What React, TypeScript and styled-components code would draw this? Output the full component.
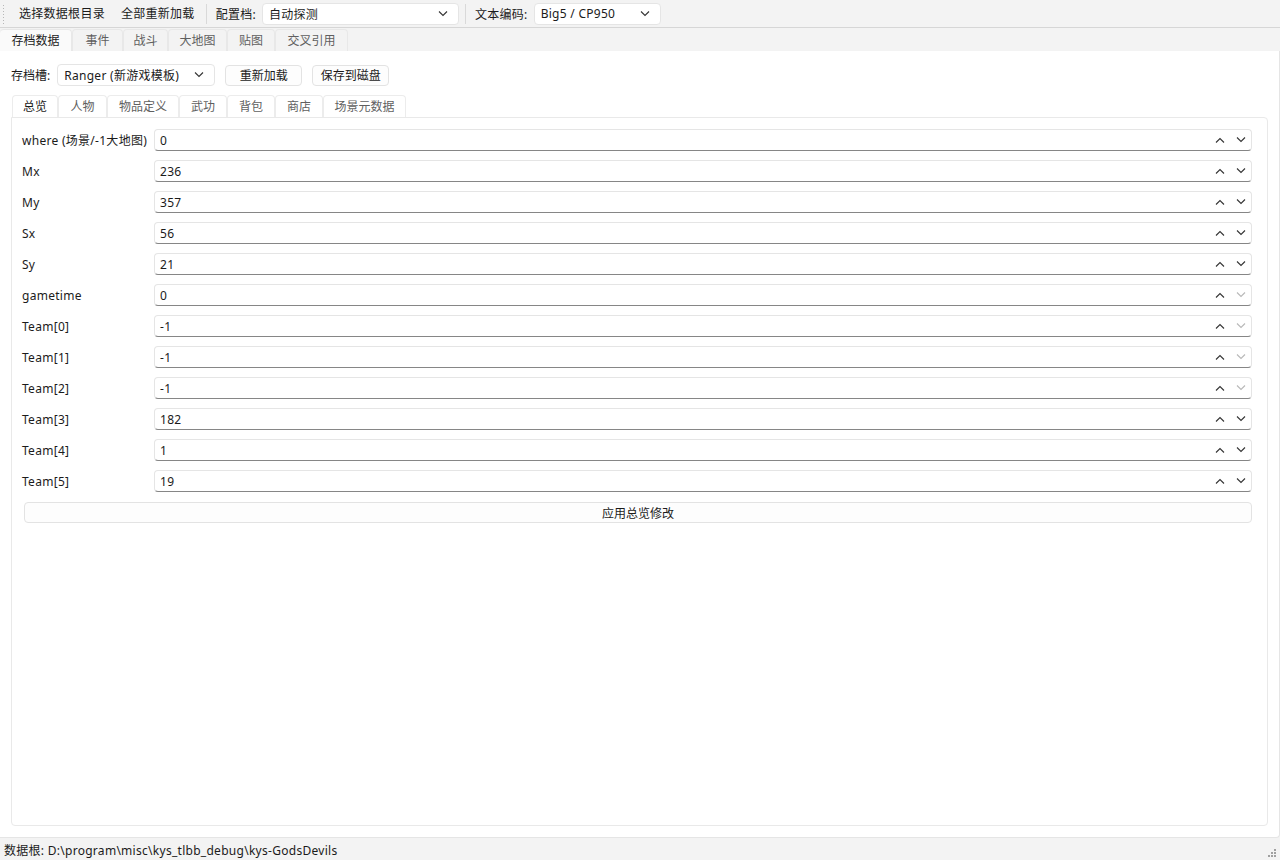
import React from 'react';
import styled, { createGlobalStyle } from 'styled-components';

const GlobalStyle = createGlobalStyle`
	html, body {
		margin: 0;
		padding: 0;
		background: #f3f3f3;
	}
	body {
		font-family: "Noto Sans", "Noto Sans CJK SC", sans-serif;
		font-size: 12px;
		letter-spacing: 0.28px;
		color: #1b1b1b;
	}
`;

const fields = [
	{ label: 'where (场景/-1大地图)', value: '0', atMin: false },
	{ label: 'Mx', value: '236', atMin: false },
	{ label: 'My', value: '357', atMin: false },
	{ label: 'Sx', value: '56', atMin: false },
	{ label: 'Sy', value: '21', atMin: false },
	{ label: 'gametime', value: '0', atMin: true },
	{ label: 'Team[0]', value: '-1', atMin: true },
	{ label: 'Team[1]', value: '-1', atMin: true },
	{ label: 'Team[2]', value: '-1', atMin: true },
	{ label: 'Team[3]', value: '182', atMin: false },
	{ label: 'Team[4]', value: '1', atMin: false },
	{ label: 'Team[5]', value: '19', atMin: false },
];

const mainTabs = [
	{ text: '存档数据', width: 72 },
	{ text: '事件', width: 51 },
	{ text: '战斗', width: 45 },
	{ text: '大地图', width: 59 },
	{ text: '贴图', width: 48 },
	{ text: '交叉引用', width: 73 },
];

const subTabs = [
	{ text: '总览', width: 46 },
	{ text: '人物', width: 49 },
	{ text: '物品定义', width: 72 },
	{ text: '武功', width: 48 },
	{ text: '背包', width: 48 },
	{ text: '商店', width: 48 },
	{ text: '场景元数据', width: 83 },
];

const Chevron = ({ up, dim }: { up?: boolean; dim?: boolean }) => (
	<svg width="10" height="6" viewBox="0 0 10 6">
		<path
			d={up ? 'M1 5.5L5 1.5L9 5.5' : 'M1 0.5L5 4.5L9 0.5'}
			fill="none"
			stroke={dim ? '#b8b8b8' : '#333'}
			strokeWidth="1.1"
		/>
	</svg>
);

const Combo = ({ text, width }: { text: string; width: number }) => (
	<ComboBox $width={width}>
		<span>{text}</span>
		<Chevron />
	</ComboBox>
);

const App = () => {
	return (
		<Window>
			<GlobalStyle />
			<ToolBar>
				<Grip />
				<ToolButton>选择数据根目录</ToolButton>
				<ToolButton>全部重新加载</ToolButton>
				<Separator />
				<ToolLabel>配置档:</ToolLabel>
				<Combo text="自动探测" width={197} />
				<Separator />
				<ToolLabel>文本编码:</ToolLabel>
				<Combo text="Big5 / CP950" width={127} />
			</ToolBar>

			<TabBar>
				{mainTabs.map((t, i) => (
					<Tab key={t.text} $active={i === 0} $width={t.width}>{t.text}</Tab>
				))}
			</TabBar>

			<MainPanel>
				<SlotRow>
					<SlotLabel>存档槽:</SlotLabel>
					<Combo text="Ranger (新游戏模板)" width={158} />
					<PushButton $width={77}>重新加载</PushButton>
					<PushButton $width={77}>保存到磁盘</PushButton>
				</SlotRow>

				<SubTabBar>
					{subTabs.map((t, i) => (
						<SubTab key={t.text} $active={i === 0} $width={t.width}>{t.text}</SubTab>
					))}
				</SubTabBar>

				<SubPanel>
					<Form>
						{fields.map((f) => (
							<FieldRow key={f.label}>
								<FieldLabel>{f.label}</FieldLabel>
								<SpinBox>
									<span>{f.value}</span>
									<Arrows>
										<Chevron up />
										<Chevron dim={f.atMin} />
									</Arrows>
								</SpinBox>
							</FieldRow>
						))}
					</Form>
					<ApplyButton>应用总览修改</ApplyButton>
				</SubPanel>
			</MainPanel>

			<StatusBar>
				<span>数据根: D:\program\misc\kys_tlbb_debug\kys-GodsDevils</span>
				<SizeGrip viewBox="0 0 12 12">
					<rect x="8" y="2" width="2" height="2" />
					<rect x="5" y="5" width="2" height="2" />
					<rect x="8" y="5" width="2" height="2" />
					<rect x="2" y="8" width="2" height="2" />
					<rect x="5" y="8" width="2" height="2" />
					<rect x="8" y="8" width="2" height="2" />
				</SizeGrip>
			</StatusBar>
		</Window>
	);
};

export default App;

const Window = styled.div`
	width: 1280px;
	height: 860px;
	display: flex;
	flex-direction: column;
	background: #f3f3f3;
	overflow: hidden;
`;

const ToolBar = styled.div`
	height: 28px;
	display: flex;
	align-items: center;
	padding-left: 2px;
	border-bottom: 1px solid #d6d6d6;
	box-sizing: border-box;
	flex-shrink: 0;
`;

const Grip = styled.div`
	width: 4px;
	height: 20px;
	margin-right: 6px;
	background-image: radial-gradient(circle, #a8a8a8 0.8px, transparent 1px);
	background-size: 3px 3px;
	opacity: 0.8;
`;

const ToolButton = styled.div`
	padding: 0 7px;
	margin-right: 2px;
	height: 22px;
	line-height: 22px;
	white-space: nowrap;
`;

const Separator = styled.div`
	width: 1px;
	height: 20px;
	background: #d9d9d9;
	margin: 0 9px 0 2px;
`;

const ToolLabel = styled.span`
	margin-right: 6px;
	white-space: nowrap;
`;

const ComboBox = styled.div<{ $width: number }>`
	width: ${(p) => p.$width}px;
	height: 22px;
	box-sizing: border-box;
	display: flex;
	align-items: center;
	justify-content: space-between;
	padding: 0 10px 0 6px;
	background: #fff;
	border: 1px solid #e5e5e5;
	border-radius: 4px;
	margin-right: 4px;
	white-space: nowrap;
`;

const TabBar = styled.div`
	display: flex;
	height: 23px;
	padding-top: 1px;
	box-sizing: border-box;
	flex-shrink: 0;
`;

const Tab = styled.div<{ $active?: boolean; $width: number }>`
	width: ${(p) => p.$width}px;
	text-align: center;
	height: 22px;
	line-height: 21px;
	box-sizing: border-box;
	border: 1px solid #e8e8e8;
	border-bottom: none;
	border-left: ${(p) => (p.$active ? 'none' : '1px solid #e8e8e8')};
	border-radius: 4px 4px 0 0;
	background: ${(p) => (p.$active ? '#fafafa' : '#f3f3f3')};
	color: ${(p) => (p.$active ? '#1b1b1b' : '#5f5f5f')};
	white-space: nowrap;
	letter-spacing: 0;
`;

const MainPanel = styled.div`
	flex: 1;
	display: flex;
	flex-direction: column;
	background: #fff;
	border-right: 1px solid #e5e5e5;
	border-bottom: 1px solid #e5e5e5;
	border-radius: 0 0 4px 0;
	padding: 13px 11px 11px 11px;
	box-sizing: border-box;
	min-height: 0;
`;

const SlotRow = styled.div`
	display: flex;
	align-items: center;
	height: 22px;
`;

const SlotLabel = styled.span`
	margin-right: 7px;
	letter-spacing: 0;
`;

const PushButton = styled.div<{ $width: number }>`
	width: ${(p) => p.$width}px;
	height: 21px;
	box-sizing: border-box;
	display: flex;
	align-items: center;
	justify-content: center;
	background: #fdfdfd;
	border: 1px solid #e3e3e3;
	border-radius: 4px;
	margin: 0 4px 0 6px;
	letter-spacing: 0;
`;

const SubTabBar = styled.div`
	display: flex;
	margin-top: 9px;
	height: 22px;
	padding-left: 1px;
`;

const SubTab = styled.div<{ $active?: boolean; $width: number }>`
	width: ${(p) => p.$width}px;
	text-align: center;
	height: 22px;
	line-height: 21px;
	box-sizing: border-box;
	border: 1px solid #ececec;
	border-bottom: none;
	border-radius: 4px 4px 0 0;
	background: #fff;
	color: ${(p) => (p.$active ? '#1b1b1b' : '#5f5f5f')};
	white-space: nowrap;
	letter-spacing: 0;
`;

const SubPanel = styled.div`
	flex: 1;
	border: 1px solid #e9e9e9;
	border-radius: 0 4px 4px 4px;
	padding: 11px 15px 0 10px;
	display: flex;
	flex-direction: column;
	min-height: 0;
`;

const Form = styled.div`
	display: flex;
	flex-direction: column;
	gap: 9px;
`;

const FieldRow = styled.div`
	display: flex;
	align-items: center;
	height: 22px;
`;

const FieldLabel = styled.div`
	width: 132px;
	flex-shrink: 0;
	white-space: nowrap;
`;

const SpinBox = styled.div`
	flex: 1;
	height: 22px;
	box-sizing: border-box;
	display: flex;
	align-items: center;
	justify-content: space-between;
	padding: 0 5px 0 5px;
	background: #fff;
	border: 1px solid #e5e5e5;
	border-bottom: 1px solid #868686;
	border-radius: 4px;
`;

const Arrows = styled.div`
	display: flex;
	gap: 11px;
	align-items: center;
`;

const ApplyButton = styled.div`
	margin: 10px 0 0 2px;
	height: 21px;
	box-sizing: border-box;
	display: flex;
	align-items: center;
	justify-content: center;
	background: #fdfdfd;
	border: 1px solid #e3e3e3;
	border-radius: 4px;
	letter-spacing: 0;
`;

const StatusBar = styled.div`
	height: 22px;
	flex-shrink: 0;
	display: flex;
	align-items: center;
	justify-content: space-between;
	padding: 0 2px 0 4px;
	span {
		margin-top: 2px;
	}
`;

const SizeGrip = styled.svg`
	width: 12px;
	height: 12px;
	fill: #a0a0a0;
	align-self: flex-end;
	margin-bottom: 1px;
`;
